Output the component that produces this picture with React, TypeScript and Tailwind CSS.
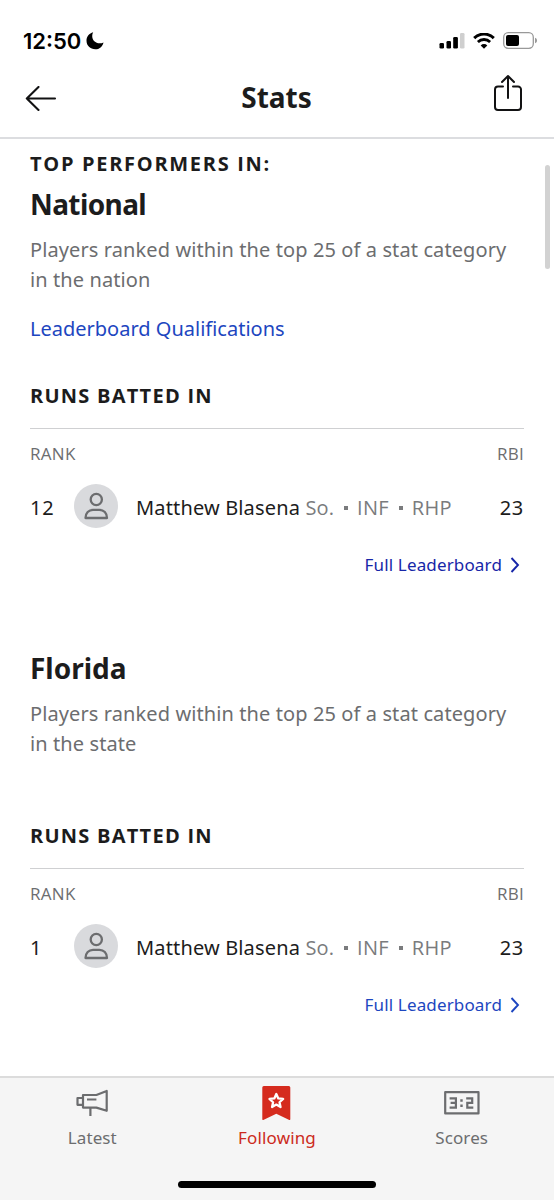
import React from 'react';

interface Leader {
  rank: number;
  name: string;
  year: string;
  positions: string[];
  value: number;
  linkClass: string;
}

const leader = { name: 'Matthew Blasena', year: 'So.', positions: ['INF', 'RHP'], value: 23 };

function StatusBar() {
  return (
    <div className="flex h-[62px] items-center justify-between pl-[23px] pr-[16px] pt-[19px]">
      <div className="flex items-center gap-[5px]">
        <span className="font-['Inter',sans-serif] text-[22px] font-semibold leading-[26px] text-black">12:50</span>
        <svg width="18" height="18" viewBox="0 0 18 18" fill="#000">
          <path d="M7.200 0.300C6.500 1.500 6.200 2.600 6.200 4c0 4.200 3.300 7.300 7.500 7.300 1.400 0 2.500-.3 3.800-.9C16.600 14.600 13.400 17.300 9.300 17.300 4.300 17.300.500 13.700.500 8.800.500 4.700 3.200 1.300 7.200.300z" />
        </svg>
      </div>
      <div className="flex items-center gap-[8px]">
        <svg width="26" height="16" viewBox="0 0 26 16">
          <rect x="0.500" y="10" width="4.500" height="5.500" rx="1.300" />
          <rect x="7.500" y="8" width="4.500" height="7.500" rx="1.300" />
          <rect x="14.200" y="4" width="4.700" height="11.500" rx="1.300" />
          <rect x="21" y="0" width="4.500" height="15.500" rx="1.300" fill="#cfcfcf" />
        </svg>
        <svg width="22" height="16" viewBox="0 0 22 16" fill="none" stroke="#000">
          <path d="M1.200 5.100a14 14 0 0 1 19.600 0" strokeWidth="3" />
          <path d="M4.900 9a8.700 8.700 0 0 1 12.200 0" strokeWidth="2.800" />
          <path d="M11 15.800 7.700 12.400a4.700 4.700 0 0 1 6.600 0z" fill="#000" stroke="none" />
        </svg>
        <svg width="35" height="17" viewBox="0 0 35 17">
          <rect x="0.700" y="0.700" width="29.600" height="15.600" rx="4.500" fill="none" stroke="#999" strokeWidth="1.300" />
          <rect x="3" y="3" width="13" height="11" rx="2" />
          <path d="M32 5.700c1.400.5 2 1.500 2 2.800s-.6 2.300-2 2.800z" fill="#999" />
        </svg>
      </div>
    </div>
  );
}

function Header() {
  return (
    <header className="flex h-[77px] items-center justify-between border-b-2 border-[#dcdde0] pl-[25px] pr-[31px] pb-[5px]">
      <button className="flex w-[32px] pt-[3px]" aria-label="Back">
        <svg width="32" height="26" viewBox="0 0 32 26" fill="none" stroke="#121213" strokeWidth="2.100" strokeLinecap="round" strokeLinejoin="round">
          <path d="M30 12.500H1.800M13.500 1 1.800 12.500 13.500 24" />
        </svg>
      </button>
      <h1 className="pl-[5px] text-[28px] font-bold leading-[36px] text-[#1c1c1c]">Stats</h1>
      <button className="flex w-[32px] justify-end pb-[8px]" aria-label="Share">
        <svg width="30" height="38" viewBox="0 0 30 38" fill="none" stroke="#121213" strokeWidth="2" strokeLinecap="round" strokeLinejoin="round">
          <path d="M10 12.500H5a3 3 0 0 0-3 3V33a3 3 0 0 0 3 3h20a3 3 0 0 0 3-3V15.500a3 3 0 0 0-3-3h-5" />
          <path d="M15 24V2M9 8l6-6 6 6" />
        </svg>
      </button>
    </header>
  );
}

function Avatar() {
  return (
    <div className="flex size-[44px] shrink-0 items-center justify-center rounded-full bg-[#d9dadd]">
      <svg width="26" height="28" viewBox="0 0 26 28" fill="none" stroke="#6c6d6f" strokeWidth="2.300">
        <circle cx="13.300" cy="7.500" r="5.600" />
        <path d="M2.500 26c0-5 3.300-8.200 7.500-8.200h6.500c4.200 0 7.500 3.200 7.500 8.200z" strokeLinejoin="round" />
      </svg>
    </div>
  );
}

function Leaderboard({ rank, name, year, positions, value, linkClass }: Leader) {
  return (
    <div>
      <h3 className="font-['Open_Sans',sans-serif] text-[20px] font-bold leading-[30px] tracking-[1.250px] text-[#1c1c1c]">RUNS BATTED IN</h3>
      <div className="mt-[17px] flex justify-between border-t border-[#cfd0d2] pt-[13px] font-['Open_Sans',sans-serif] text-[17px] leading-[24px] tracking-[0.300px] text-[#6c6d6f]">
        <span>RANK</span>
        <span>RBI</span>
      </div>
      <div className="mt-[18px] flex h-[44px] items-center text-[20px] leading-[28px] text-[#1c1c1c]">
        <span className="w-[44px] pt-[3px] tracking-[0.700px]">{rank}</span>
        <Avatar />
        <div className="ml-[18px] flex-1 whitespace-nowrap pt-[3px] tracking-[0.150px]">
          {name}{' '}
          <span className="font-['Open_Sans',sans-serif] text-[#7a7b7d]">
            {year}
            {positions.map((position) => (
              <React.Fragment key={position}>
                <span className="ml-[10px] mr-[9px] inline-block size-[4px] -translate-y-[5px] bg-[#7a7b7d]" />
                <span className="tracking-[0.250px]">{position}</span>
              </React.Fragment>
            ))}
          </span>
        </div>
        <span className="tracking-[0.700px] pt-[3px]">{value}</span>
      </div>
      <div className={`mt-[25px] flex items-center justify-end gap-[8px] pr-[4px] text-[17px] leading-[24px] ${linkClass}`}>
        <span className="tracking-[0.150px]">Full Leaderboard</span>
        <svg width="10" height="16" viewBox="0 0 10 16" fill="none" stroke="currentColor" strokeWidth="1.900">
          <path d="m1.500 1 6.500 7-6.500 7" />
        </svg>
      </div>
    </div>
  );
}

interface RegionProps {
  title: string;
  area: string;
  titleClass?: string;
}

function RegionIntro({ title, area, titleClass = '' }: RegionProps) {
  return (
    <>
      <h2 className={`text-[28px] font-bold leading-[36px] text-[#1c1c1c] ${titleClass}`}>{title}</h2>
      <p className="mt-[13px] whitespace-nowrap text-[20px] leading-[29.500px] tracking-[0.100px] text-[#6c6d6f]">
        Players ranked within the top 25 of a stat category
        <br />
        in the {area}
      </p>
    </>
  );
}

function TabBar() {
  return (
    <nav className="relative flex h-[124px] border-t-2 border-[#dcdcdc] bg-[#f5f5f5] text-[17px] leading-[24px] text-[#6c6d6f]">
      <div className="flex flex-1 flex-col items-center pt-[8px]">
        <svg width="36" height="36" viewBox="0 0 36 36" fill="none" stroke="#6c6d6f" strokeWidth="2.200" strokeLinejoin="round">
          <path d="M9 9h13.400L32.700 5v19.800L22.400 21.600H9z" />
          <path d="M9 12H3.500v6.800H9M13 13.500h9.400M16.400 21.600V30" />
        </svg>
        <span className="mt-[4px] tracking-[0.100px]">Latest</span>
      </div>
      <div className="flex flex-1 flex-col items-center pt-[8px] text-[#cc2a20]">
        <svg width="30" height="36" viewBox="0.700 0 30 36">
          <path d="M1 1.500A1.500 1.500 0 0 1 2.500 0h25A1.500 1.500 0 0 1 29 1.500V33.300a.7.7 0 0 1-1 .6L15 27.800 2 33.900a.7.7 0 0 1-1-.6z" fill="#d52b1e" />
          <path d="m15 8 2 4.450 4.850.530-3.620 3.270 1 4.780L15 18.600l-4.230 2.430 1-4.780-3.620-3.270 4.850-.530z" fill="none" stroke="#fff" strokeWidth="2.300" strokeLinejoin="round" />
        </svg>
        <span className="mt-[4px] tracking-[0.150px]">Following</span>
      </div>
      <div className="flex flex-1 flex-col items-center pt-[8px]">
        <svg width="36" height="36" viewBox="0 0 36 36" fill="none" stroke="#6c6d6f" strokeWidth="2.200">
          <rect x="1.200" y="6.200" width="33.300" height="21.200" strokeLinejoin="round" />
          <path d="M5.600 12.300h6.300v9.300H5.600M6.600 16.900h5.300M22.200 12.300h6v4.600h-4.900v4.700h6" />
          <path d="M16.300 14.500h2.400M16.300 19.700h2.400" strokeWidth="2.400" />
        </svg>
        <span className="mt-[4px] tracking-[0.100px]">Scores</span>
      </div>
      <div className="absolute bottom-[12px] left-1/2 h-[7px] w-[198px] -translate-x-1/2 rounded-full bg-black" />
    </nav>
  );
}

export default function App() {
  return (
    <div className="relative flex h-[1200px] w-[554px] flex-col overflow-hidden bg-white font-['Noto_Sans',sans-serif]">
      <StatusBar />
      <Header />
      <main className="flex-1 px-[30px] pt-[13px]">
        <p className="mb-[10px] font-['Open_Sans',sans-serif] text-[20px] font-bold leading-[24px] tracking-[1.700px] text-[#1c1c1c]">TOP PERFORMERS IN:</p>
        <section>
          <RegionIntro title="National" area="nation" titleClass="tracking-[-0.600px]" />
          <a className="mb-[37px] mt-[20px] block text-[20px] leading-[30px] text-[#1d46c0]">Leaderboard Qualifications</a>
          <Leaderboard {...leader} rank={12} linkClass="text-[#1726a8]" />
        </section>
        <section className="mt-[73px]">
          <RegionIntro title="Florida" area="state" />
          <div className="h-[63px]" />
          <Leaderboard {...leader} rank={1} linkClass="text-[#1d46c0]" />
        </section>
      </main>
      <TabBar />
      {/* Scroll position indicator */}
      <div className="absolute right-[4px] top-[165px] h-[104px] w-[5px] rounded-full bg-[#d2d2d2]" />
    </div>
  );
}
